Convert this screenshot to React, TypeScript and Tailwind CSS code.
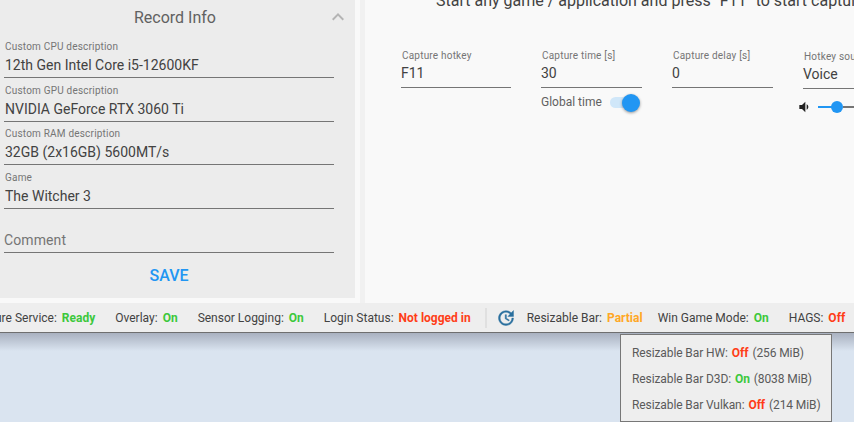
const font = { fontFamily: 'Roboto, sans-serif' };

function Field({ label, value, muted, h = 'h-[44px]' }: { label?: string; value: string; muted?: boolean; h?: string }) {
  return (
    <div className={`${h} border-b border-[#757575] ml-1 w-[330px] flex flex-col justify-end shrink-0`}>
      {label && <div className="text-[10px] leading-[12px] text-[#757575] ml-px tracking-[0.2px] mb-[2px]">{label}</div>}
      <div className={`text-[14px] leading-[20px] pb-[2px] ${muted ? 'text-[#757575] tracking-[0.1px]' : 'text-[#424242] ml-px'}`}>{value}</div>
    </div>
  );
}

function TopField({ label, value, w, className }: { label: string; value: string; w: string; className?: string }) {
  return (
    <div className={`${w} ${className ?? ''} border-b border-[#757575] h-[38px] flex flex-col shrink-0`}>
      <div className="text-[10px] leading-[12px] text-[#757575] ml-px tracking-[0.2px] whitespace-nowrap">{label}</div>
      <div className="text-[14px] leading-[20px] text-[#424242] mt-px whitespace-nowrap">{value}</div>
    </div>
  );
}

function Stat({ label, value, color, className }: { label: string; value: string; color: string; className?: string }) {
  return (
    <div className={`flex gap-[5px] whitespace-nowrap shrink-0 ${className ?? ''}`}>
      <span className="text-[#424242]">{label}</span>
      <span className={`font-bold ${color}`}>{value}</span>
    </div>
  );
}

function PopRow({ label, value, color, rest }: { label: string; value: string; color: string; rest: string }) {
  return (
    <div className="h-[26px] flex items-center whitespace-nowrap gap-[4px] text-[#5a5a5a] tracking-[-0.1px]">
      <span>{label}</span>
      <span className={`font-bold ${color}`}>{value}</span>
      <span>{rest}</span>
    </div>
  );
}

export default function App() {
  return (
    <div style={font} className="relative w-[854px] h-[422px] overflow-hidden bg-[#dae4f0]">
      <div className="h-[333px] bg-[#f9f9f9] flex flex-col">
        <div className="h-[303px] flex">
          <div className="w-[355px] h-[298px] bg-[#ececec] shrink-0 flex flex-col">
            <div className="h-[34px] pt-px flex items-center relative shrink-0">
              <div className="w-[350px] text-center text-[16px] text-[#616161]">Record Info</div>
              <svg className="absolute left-[326px] top-[5px]" width="24" height="24" viewBox="0 0 24 24" fill="#b4b4b4"><path d="M7.41 15.41 12 10.83l4.59 4.58L18 14l-6-6-6 6z" /></svg>
            </div>
            <Field label="Custom CPU description" value="12th Gen Intel Core i5-12600KF" />
            <Field label="Custom GPU description" value="NVIDIA GeForce RTX 3060 Ti" />
            <Field label="Custom RAM description" value="32GB (2x16GB) 5600MT/s" h="h-[43px]" />
            <Field label="Game" value="The Witcher 3" />
            <Field value="Comment" muted />
            <div className="mt-[13px] w-[338px] text-center text-[16px] leading-[19px] font-medium text-[#2196f3]">SAVE</div>
          </div>
          <div className="ml-[5px] w-[5px] shrink-0 bg-[#f1f1f1]" />
          <div className="flex-1 min-w-0 bg-[#f9f9f9] overflow-hidden">
            <div className="text-[16px] leading-[18px] mt-[-8px] ml-[71px] text-[#424242] whitespace-nowrap">
              Start any game / application and press "F11" to start capture
            </div>
            <div className="flex mt-[40px] ml-[36px]">
              <TopField label="Capture hotkey" value="F11" w="w-[110px]" />
              <div className="ml-[30px] w-[101px] shrink-0">
                <TopField label="Capture time [s]" value="30" w="w-[101px]" />
                <div className="flex items-center h-[28px] relative">
                  <span className="text-[12px] text-[#616161]">Global time</span>
                  <div className="absolute left-[69px] top-[9px] w-[28px] h-[11px] rounded-full bg-[#d0e7f9]" />
                  <div className="absolute left-[81px] top-[6px] w-[18px] h-[18px] rounded-full bg-[#2196f3] shadow-[0_1px_3px_rgba(0,0,0,0.4)]" />
                </div>
              </div>
              <TopField label="Capture delay [s]" value="0" w="w-[101px]" className="ml-[30px]" />
              <div className="ml-[30px] w-[120px] shrink-0 mt-px">
                <TopField label="Hotkey sound" value="Voice" w="w-[120px]" />
                <div className="flex items-center h-[36px] -ml-[7px]">
                  <svg className="shrink-0" width="16" height="16" viewBox="0 0 24 24" fill="#212121"><path d="M18.5 12c0-1.77-1.02-3.29-2.5-4.03v8.05c1.48-.73 2.5-2.25 2.5-4.02zM5 9v6h4l5 5V4L9 9H5z" /></svg>
                  <div className="ml-[6px] w-[14px] h-[2px] bg-[#2196f3] shrink-0" />
                  <div className="w-[12px] h-[12px] rounded-full bg-[#2196f3] -ml-px shrink-0" />
                  <div className="w-[60px] h-[2px] bg-[#757575] shrink-0" />
                </div>
              </div>
            </div>
          </div>
        </div>
        <div className="h-[30px] bg-[#eeeeee] border-b border-[#6f6f6f] flex items-center text-[12px] overflow-hidden shrink-0 w-[854px]">
          <Stat label="Capture Service:" value="Ready" color="text-[#3cc83c]" className="-ml-[30px]" />
          <Stat label="Overlay:" value="On" color="text-[#3cc83c]" className="ml-[20px]" />
          <Stat label="Sensor Logging:" value="On" color="text-[#3cc83c]" className="ml-[20px]" />
          <Stat label="Login Status:" value="Not logged in" color="text-[#ff3d17]" className="ml-[20px]" />
          <div className="ml-[14px] w-[2px] h-[20px] bg-[#e0e0e0] shrink-0" />
          <svg className="ml-[9px] shrink-0" width="20" height="20" viewBox="0 0 24 24" fill="#2a6f9e" stroke="#2a6f9e" strokeWidth="0.5"><path d="M21 10.12h-6.78l2.74-2.82c-2.73-2.7-7.15-2.8-9.88-.1-2.73 2.71-2.73 7.08 0 9.79s7.15 2.71 9.88 0C18.32 15.65 19 14.08 19 12.1h2c0 1.98-.88 4.55-2.64 6.29-3.51 3.48-9.21 3.48-12.72 0-3.5-3.47-3.53-9.11-.02-12.58s9.14-3.47 12.65 0L21 3v7.12zM12.5 8v4.25l3.5 2.08-.72 1.21L11 13V8h1.5z" /></svg>
          <Stat label="Resizable Bar:" value="Partial" color="text-[#ffa726]" className="ml-[11px]" />
          <Stat label="Win Game Mode:" value="On" color="text-[#3cc83c]" className="ml-[15px]" />
          <Stat label="HAGS:" value="Off" color="text-[#ff3d17]" className="ml-[20px]" />
        </div>
      </div>
      <div className="h-[18px] bg-gradient-to-b from-[#a9b1c0] to-[#dae4f0]" />
      <div className="absolute left-[620px] top-[334px] w-[212px] h-[88px] bg-[#eeeeee] border border-[#777777] pl-[11px] pt-[5px] text-[12px]">
        <PopRow label="Resizable Bar HW:" value="Off" color="text-[#ff3d17]" rest="(256 MiB)" />
        <PopRow label="Resizable Bar D3D:" value="On" color="text-[#3cc83c]" rest="(8038 MiB)" />
        <PopRow label="Resizable Bar Vulkan:" value="Off" color="text-[#ff3d17]" rest="(214 MiB)" />
      </div>
    </div>
  );
}
